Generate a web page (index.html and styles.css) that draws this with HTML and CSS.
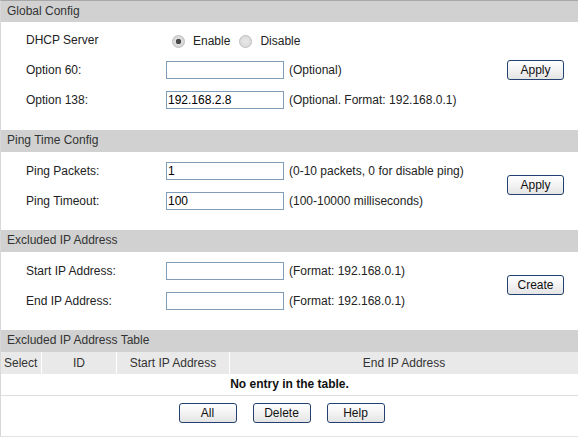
FILE: index.html
```html
<!DOCTYPE html>
<html>
<head>
<meta charset="utf-8">
<link rel="stylesheet" href="styles.css">
</head>
<body>
<div class="page">
  <div class="sec-head">Global Config</div>
  <div class="sec-body global">
    <div class="lbl">DHCP Server</div>
    <div class="radios">
      <span class="radio checked"></span><span class="rtext">Enable</span>
      <span class="radio"></span><span class="rtext">Disable</span>
    </div>
    <div class="lbl">Option 60:</div>
    <div class="field"><span class="input"></span></div>
    <div class="note">(Optional)</div>
    <div class="btncell"><span class="btn">Apply</span></div>
    <div class="lbl">Option 138:</div>
    <div class="field"><span class="input">192.168.2.8</span></div>
    <div class="note">(Optional. Format: 192.168.0.1)</div>
  </div>

  <div class="sec-head">Ping Time Config</div>
  <div class="sec-body two">
    <div class="lbl">Ping Packets:</div>
    <div class="field"><span class="input">1</span></div>
    <div class="note">(0-10 packets, 0 for disable ping)</div>
    <div class="btncell span2"><span class="btn">Apply</span></div>
    <div class="lbl">Ping Timeout:</div>
    <div class="field"><span class="input">100</span></div>
    <div class="note">(100-10000 milliseconds)</div>
  </div>

  <div class="sec-head">Excluded IP Address</div>
  <div class="sec-body two">
    <div class="lbl">Start IP Address:</div>
    <div class="field"><span class="input"></span></div>
    <div class="note">(Format: 192.168.0.1)</div>
    <div class="btncell span2"><span class="btn">Create</span></div>
    <div class="lbl">End IP Address:</div>
    <div class="field"><span class="input"></span></div>
    <div class="note">(Format: 192.168.0.1)</div>
  </div>

  <div class="sec-head">Excluded IP Address Table</div>
  <div class="thead">
    <div class="th c-select">Select</div>
    <div class="th c-id">ID</div>
    <div class="th c-start">Start IP Address</div>
    <div class="th c-end">End IP Address</div>
  </div>
  <div class="empty">No entry in the table.</div>
  <div class="actions">
    <span class="btn">All</span>
    <span class="btn">Delete</span>
    <span class="btn">Help</span>
  </div>
</div>
</body>
</html>
```

FILE: styles.css
```css
html, body {
  margin: 0;
  padding: 0;
  background: #fff;
}
body {
  font-family: "Liberation Sans", Arial, sans-serif;
  font-size: 12px;
  color: #222;
}
.page {
  width: 577px;
  border-top: 1px solid #a8a8a8;
  border-left: 1px solid #d8d8d8;
}
.sec-head {
  height: 22px;
  line-height: 21px;
  background: #d1d1d1;
  padding-left: 6px;
  color: #333;
}
.page > .sec-head:first-child {
  height: 21px;
}
.sec-body {
  display: grid;
  grid-template-columns: 140px 118px 1fr 57px;
  grid-auto-rows: 30px;
  padding: 3px 14px 15px 25px;
  align-items: center;
}
.sec-body.two {
  padding: 4px 14px 14px 25px;
}
.lbl {
  padding-bottom: 1px;
}
.radios {
  grid-column: 2 / 5;
  display: flex;
  align-items: center;
  padding-top: 2px;
}
.radio {
  width: 11px;
  height: 11px;
  border-radius: 50%;
  border: 1px solid #bdbdbd;
  background: radial-gradient(circle, #e8e8e8 0, #d6d6d6 100%);
  margin-left: 6px;
  margin-right: 8px;
  box-sizing: content-box;
}
.radio.checked {
  background: radial-gradient(circle, #4a4a4a 0, #4a4a4a 2.5px, #dcdcdc 3px, #d4d4d4 100%);
}
.rtext + .radio {
  margin-left: 9px;
}
.rtext {
  color: #222;
}
.field {
  display: flex;
}
.input {
  box-sizing: border-box;
  width: 118px;
  height: 18px;
  border: 1px solid #7f9db9;
  line-height: 16px;
  padding-left: 1px;
  color: #000;
  background: #fff;
}
.note {
  padding-left: 5px;
}
.btncell {
  display: flex;
  align-items: center;
  justify-content: flex-start;
  padding-bottom: 1px;
}
.btncell.span2 {
  grid-column: 4;
  grid-row: 1 / 3;
  padding-bottom: 3px;
}
.global .btncell {
  grid-column: 4;
  grid-row: 2;
}
.btn {
  box-sizing: border-box;
  display: inline-flex;
  align-items: center;
  justify-content: center;
  width: 57px;
  height: 20px;
  border: 1px solid #23416e;
  border-radius: 3px;
  background: linear-gradient(#ffffff, #f3f3f3 50%, #e4e4e4);
  color: #111;
  font-size: 12px;
}
.thead {
  display: flex;
  height: 22px;
  background: #e9e9e9;
  color: #333;
}
.th {
  display: flex;
  align-items: center;
  justify-content: center;
}
.c-select {
  width: 40px;
  justify-content: flex-start;
  padding-left: 3px;
  box-sizing: border-box;
}
.c-id {
  width: 74px;
  border-left: 1px solid #fff;
}
.c-start {
  width: 112px;
  border-left: 1px solid #fff;
}
.c-end {
  flex: 1;
  border-left: 1px solid #fff;
}
.empty {
  height: 21px;
  line-height: 20px;
  text-align: center;
  font-weight: bold;
  color: #111;
  border-bottom: 1px solid #dedede;
}
.actions {
  display: flex;
  justify-content: center;
  gap: 16px;
  padding: 7px 0 12px 0;
  padding-right: 16px;
  border-bottom: 1px solid #e2e2e2;
  height: 21px;
}
.actions .btn {
  width: 58px;
}
```
